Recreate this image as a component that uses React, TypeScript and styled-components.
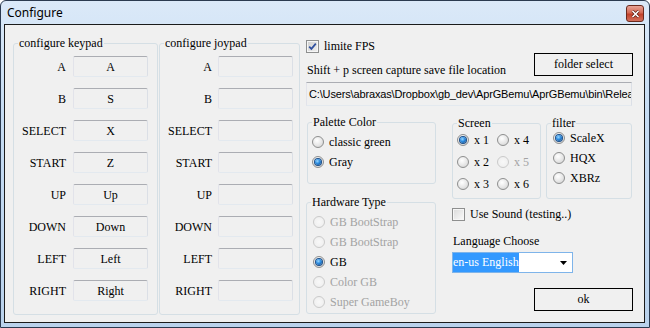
import React from "react";
import styled, { createGlobalStyle } from "styled-components";

const serif = `"Liberation Serif", "Times New Roman", serif`;

const GlobalStyle = createGlobalStyle`
  html, body {
    margin: 0;
    padding: 0;
    background: #ffffff;
  }
  body {
    overflow: hidden;
  }
`;

// window frame

const Window = styled.div`
  box-sizing: border-box;
  width: 650px;
  height: 328px;
  border: 1px solid #2b3a4f;
  border-radius: 6px 6px 0 0;
  background: linear-gradient(180deg, #dbe9f8 0%, #c6dcf3 35%, #bad2ec 100%);
  padding: 0 4px 4px 3px;
  display: flex;
  flex-direction: column;
`;

const TitleBar = styled.div`
  height: 23px;
  flex: none;
  display: flex;
  align-items: flex-start;
  justify-content: space-between;
`;

const TitleText = styled.span`
  font-family: "Noto Sans", "Liberation Sans", sans-serif;
  font-size: 12px;
  line-height: 16px;
  color: #000;
  margin: 4px 0 0 3px;
`;

const CloseButton = styled.div`
  box-sizing: border-box;
  width: 18px;
  height: 17px;
  margin: 4px 1px 0 0;
  border: 1px solid #6b2a1e;
  border-radius: 3px;
  background: linear-gradient(180deg, #e8a497 0%, #d46a55 45%, #c2412a 55%, #d2705c 100%);
  display: flex;
  align-items: center;
  justify-content: center;
`;

const Client = styled.div`
  flex: 1;
  border: 1px solid #1b1b1b;
  background: #f0f0f0;
  display: flex;
  align-items: flex-start;
  padding: 11px 0 0 8px;
  font-family: ${serif};
  font-size: 12px;
  color: #000;
`;

// group boxes

const Group = styled.fieldset<{ $w: number; $pb?: number }>`
  box-sizing: border-box;
  width: ${p => p.$w}px;
  min-width: 0;
  margin: 0;
  padding: 0 0 ${p => p.$pb ?? 0}px 4px;
  border: 1px solid #d5dfe5;
  border-radius: 3px;
`;

const Legend = styled.legend`
  padding: 0 1px;
  height: 14px;
  line-height: 14px;
  font-size: 12px;
`;

// key mapping

const KeyList = styled.div`
  display: flex;
  flex-direction: column;
  gap: 11px;
  margin-top: 6px;
`;

const KeyRow = styled.div<{ $gap: number }>`
  display: flex;
  align-items: center;
  gap: ${p => p.$gap}px;
`;

const KeyLabel = styled.span`
  width: 48px;
  text-align: right;
  white-space: nowrap;
  line-height: 14px;
`;

const KeyBox = styled.div`
  box-sizing: border-box;
  width: 75px;
  height: 21px;
  border: 1px solid;
  border-color: #abadb3 #dbdfe6 #e3e9ef #e2e3ea;
  border-radius: 2px;
  background: #f0f0f0;
  display: flex;
  align-items: center;
  justify-content: center;
  line-height: 14px;
`;

// right side

const Right = styled.div`
  width: 327px;
  margin-left: 6px;
  display: flex;
  flex-direction: column;
`;

const TopRow = styled.div`
  display: flex;
  justify-content: space-between;
  align-items: flex-start;
`;

const TopLeft = styled.div`
  display: flex;
  flex-direction: column;
`;

const CheckRow = styled.div<{ $h: number }>`
  display: flex;
  align-items: center;
  gap: 5px;
  height: ${p => p.$h}px;
`;

const CheckBox = styled.span<{ $checked?: boolean }>`
  box-sizing: border-box;
  width: 13px;
  height: 13px;
  flex: none;
  border: 1px solid #8e8f8f;
  background: ${p =>
    p.$checked
      ? "linear-gradient(135deg, #cfcfcf, #f0f0f0)"
      : "linear-gradient(135deg, #dadada, #fbfbfb)"};
  box-shadow: inset 0 0 0 1px #f6f6f6;
  display: flex;
  align-items: center;
  justify-content: center;
`;

const Caption = styled.div`
  margin-top: 6px;
  line-height: 16px;
  padding-left: 1px;
  white-space: nowrap;
`;

const PushButton = styled.button<{ $mt: number }>`
  box-sizing: border-box;
  width: 99px;
  height: 23px;
  margin-top: ${p => p.$mt}px;
  padding: 0;
  border: 1px solid #000;
  border-radius: 0;
  background: #f0f0f0;
  font-family: ${serif};
  font-size: 12px;
  color: #000;
  flex: none;
`;

const PathBox = styled.div`
  box-sizing: border-box;
  width: 326px;
  height: 24px;
  margin-top: 4px;
  border: 1px solid;
  border-color: #abadb3 #dbdfe6 #e3e9ef #e2e3ea;
  background: #f0f0f0;
  padding-left: 2px;
  overflow: hidden;
  white-space: nowrap;
  font-family: "Liberation Sans", Arial, sans-serif;
  font-size: 11px;
  letter-spacing: -0.15px;
  line-height: 22px;
`;

const Lower = styled.div`
  display: grid;
  grid-template-columns: 130px 181px;
  column-gap: 16px;
  margin-top: 9px;
  align-items: start;
`;

const Column = styled.div<{ $pt?: number }>`
  display: flex;
  flex-direction: column;
  padding-top: ${p => p.$pt ?? 0}px;
`;

const GroupPair = styled.div`
  display: flex;
  gap: 5px;
  align-items: stretch;
`;

const RadioList = styled.div<{ $gap: number; $mt: number; $inset: number }>`
  display: flex;
  flex-direction: column;
  gap: ${p => p.$gap}px;
  margin-top: ${p => p.$mt}px;
  padding-left: ${p => p.$inset}px;
`;

const RadioGrid = styled.div`
  display: grid;
  grid-template-columns: 40px 40px;
  row-gap: 6px;
  margin-top: 2px;
`;

const RadioRow = styled.div<{ $disabled?: boolean }>`
  display: flex;
  align-items: center;
  gap: 5px;
  height: 16px;
  white-space: nowrap;
  color: ${p => (p.$disabled ? "#a3a3a3" : "#000")};
`;

const RadioDot = styled.span<{ $checked?: boolean; $disabled?: boolean }>`
  box-sizing: border-box;
  width: 12px;
  height: 12px;
  flex: none;
  border-radius: 50%;
  border: 1px solid ${p => (p.$disabled ? "#cacaca" : "#8e8f8f")};
  background: ${p =>
    p.$disabled
      ? "radial-gradient(circle at 50% 50%, #f8f8f8 0%, #ececec 100%)"
      : "radial-gradient(circle at 40% 35%, #ffffff 0%, #e6e6e6 55%, #cdcdcd 100%)"};
  display: flex;
  align-items: center;
  justify-content: center;

  &::after {
    content: "";
    display: ${p => (p.$checked ? "block" : "none")};
    width: 6px;
    height: 6px;
    border-radius: 50%;
    background: radial-gradient(circle at 40% 35%, #9ad8ff 0%, #2b8be0 45%, #0c3f7c 100%);
    box-shadow: 0 0 0 1px #1b4f8a;
  }
`;

const LangLabel = styled.div`
  margin-top: 11px;
  padding-left: 1px;
  line-height: 16px;
`;

const Combo = styled.div`
  box-sizing: border-box;
  width: 121px;
  height: 21px;
  margin-top: 3px;
  border: 1px solid #7eb4ea;
  background: #fff;
  display: flex;
  align-items: center;
  justify-content: space-between;
  padding-right: 5px;
`;

const ComboValue = styled.span`
  background: #3399ff;
  color: #fff;
  height: 19px;
  line-height: 19px;
  white-space: nowrap;
`;

type RadioProps = {
  label: string;
  checked?: boolean;
  disabled?: boolean;
};

const Radio = (props: RadioProps) => {
  return <RadioRow $disabled={props.disabled}>
    <RadioDot $checked={props.checked} $disabled={props.disabled} />
    <span>{props.label}</span>
  </RadioRow>
}

type KeyGroupProps = {
  title: string;
  width: number;
  gap: number;
  values: string[];
  style?: React.CSSProperties;
}

const keyNames = ["A", "B", "SELECT", "START", "UP", "DOWN", "LEFT", "RIGHT"];

const KeyGroup = (props: KeyGroupProps) => {
  return <Group $w={props.width} $pb={13} style={props.style}>
    <Legend>{props.title}</Legend>
    <KeyList>
      {keyNames.map((name, i) => (
        <KeyRow key={name} $gap={props.gap}>
          <KeyLabel>{name}</KeyLabel>
          <KeyBox>{props.values[i]}</KeyBox>
        </KeyRow>
      ))}
    </KeyList>
  </Group>
}

const CheckMark = () => (
  <svg width="9" height="9" viewBox="0 0 9 9">
    <path d="M1.2 4.6 L3.4 6.9 L7.8 1.6" fill="none" stroke="#2f4f9e" strokeWidth="1.7" />
  </svg>
);

const App = () => {
  return <>
    <GlobalStyle />
    <Window>
      <TitleBar>
        <TitleText>Configure</TitleText>
        <CloseButton>
          <svg width="9" height="8" viewBox="0 0 9 8">
            <path d="M1.5 1 L7.5 7 M7.5 1 L1.5 7" stroke="#5a1a10" strokeWidth="3" />
            <path d="M1.5 1 L7.5 7 M7.5 1 L1.5 7" stroke="#ffffff" strokeWidth="1.6" />
          </svg>
        </CloseButton>
      </TitleBar>
      <Client>
        <KeyGroup
          title="configure keypad"
          width={145}
          gap={7}
          values={["A", "S", "X", "Z", "Up", "Down", "Left", "Right"]}
        />
        <KeyGroup
          title="configure joypad"
          width={141}
          gap={6}
          values={["", "", "", "", "", "", "", ""]}
          style={{ marginLeft: 1 }}
        />
        <Right>
          <TopRow>
            <TopLeft>
              <CheckRow $h={20}>
                <CheckBox $checked><CheckMark /></CheckBox>
                <span>limite FPS</span>
              </CheckRow>
              <Caption>Shift + p screen capture save file location</Caption>
            </TopLeft>
            <PushButton $mt={17}>folder select</PushButton>
          </TopRow>
          <PathBox>C:\Users\abraxas\Dropbox\gb_dev\AprGBemu\AprGBemu\bin\Release</PathBox>
          <Lower>
            <Column>
              <Group $w={129} $pb={13} style={{ marginLeft: 1 }}>
                <Legend>Palette Color</Legend>
                <RadioList $gap={4} $mt={5} $inset={0}>
                  <Radio label="classic green" />
                  <Radio label="Gray" checked />
                </RadioList>
              </Group>
              <Group $w={130} $pb={3} style={{ marginTop: 11 }}>
                <Legend>Hardware Type</Legend>
                <RadioList $gap={4} $mt={5} $inset={2}>
                  <Radio label="GB BootStrap" disabled />
                  <Radio label="GB BootStrap" disabled />
                  <Radio label="GB" checked />
                  <Radio label="Color GB" disabled />
                  <Radio label="Super GameBoy" disabled />
                </RadioList>
              </Group>
            </Column>
            <Column $pt={1}>
              <GroupPair>
                <Group $w={89} $pb={6}>
                  <Legend>Screen</Legend>
                  <RadioGrid>
                    <Radio label="x 1" checked />
                    <Radio label="x 4" />
                    <Radio label="x 2" />
                    <Radio label="x 5" disabled />
                    <Radio label="x 3" />
                    <Radio label="x 6" />
                  </RadioGrid>
                </Group>
                <Group $w={86}>
                  <Legend>filter</Legend>
                  <RadioList $gap={4} $mt={0} $inset={2}>
                    <Radio label="ScaleX" checked />
                    <Radio label="HQX" />
                    <Radio label="XBRz" />
                  </RadioList>
                </Group>
              </GroupPair>
              <CheckRow $h={16} style={{ marginTop: 7 }}>
                <CheckBox />
                <span>Use Sound (testing..)</span>
              </CheckRow>
              <LangLabel>Language Choose</LangLabel>
              <Combo>
                <ComboValue>en-us English</ComboValue>
                <svg width="7" height="4" viewBox="0 0 7 4">
                  <polygon points="0,0 7,0 3.5,4" fill="#000" />
                </svg>
              </Combo>
              <PushButton $mt={15} style={{ alignSelf: "flex-end" }}>ok</PushButton>
            </Column>
          </Lower>
        </Right>
      </Client>
    </Window>
  </>
}

export default App;
